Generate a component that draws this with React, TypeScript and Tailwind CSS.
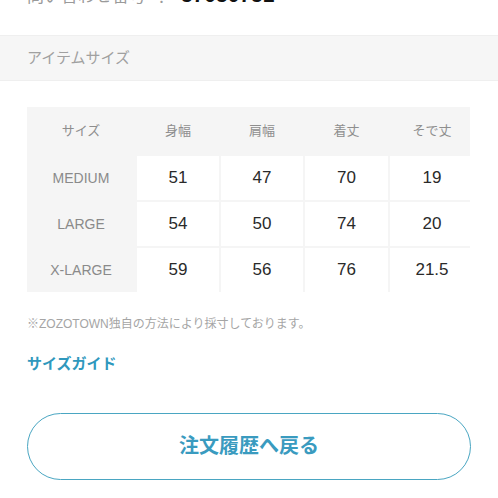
import React from "react";

const font = { fontFamily: '"Liberation Sans", "Noto Sans CJK JP", sans-serif' };

const headers = ["サイズ", "身幅", "肩幅", "着丈", "そで丈"];
const rows = [
  ["MEDIUM", "51", "47", "70", "19"],
  ["LARGE", "54", "50", "74", "20"],
  ["X-LARGE", "59", "56", "76", "21.5"],
];

export default function App() {
  return (
    <div className="w-[498px] h-[498px] overflow-hidden bg-white" style={font}>
      <div className="flex items-end px-[27px] mt-[-17px] h-[22px] leading-none">
        <span className="text-[17px] text-[#9a9a9a]">問い合わせ番号</span>
        <span className="text-[15px] text-[#9a9a9a] ml-[8px]">：</span>
        <span className="text-[21px] font-bold text-[#111] ml-[12px]">57050751</span>
      </div>
      <div className="mt-[30px] h-[46px] bg-[#f6f6f6] border-y border-[#efefef] flex items-center px-[27px]">
        <span className="text-[15px] text-[#a0a0a0]">アイテムサイズ</span>
      </div>
      <div className="mx-[27px] mt-[26px] grid grid-cols-[108px_82px_82px_83px_84px] gap-[2px] bg-[#f5f5f5] w-[443px]">
        {headers.map((h) => (
          <div key={h} className="h-[47px] flex items-center justify-center text-[13px] text-[#8e8e8e]">
            {h}
          </div>
        ))}
        {rows.map((r) => (
          <React.Fragment key={r[0]}>
            <div className="h-[44px] flex items-center justify-center text-[14px] text-[#8a8a8a]">{r[0]}</div>
            {r.slice(1).map((v, i) => (
              <div key={i} className="h-[44px] bg-white flex items-center justify-center text-[17px] text-[#2a2a2a]">
                {v}
              </div>
            ))}
          </React.Fragment>
        ))}
      </div>
      <div className="px-[27px] mt-[23px] text-[12px] text-[#a5a5a5]">※ZOZOTOWN独自の方法により採寸しております。</div>
      <div className="px-[27px] mt-[20px] text-[15px] font-bold text-[#2f98bd]">サイズガイド</div>
      <div className="px-[27px] mt-[37px]">
        <div className="h-[67px] rounded-full border-[1.5px] border-[#4aa6c2] flex items-center justify-center text-[20px] font-bold text-[#3a9bbf]">
          注文履歴へ戻る
        </div>
      </div>
    </div>
  );
}
